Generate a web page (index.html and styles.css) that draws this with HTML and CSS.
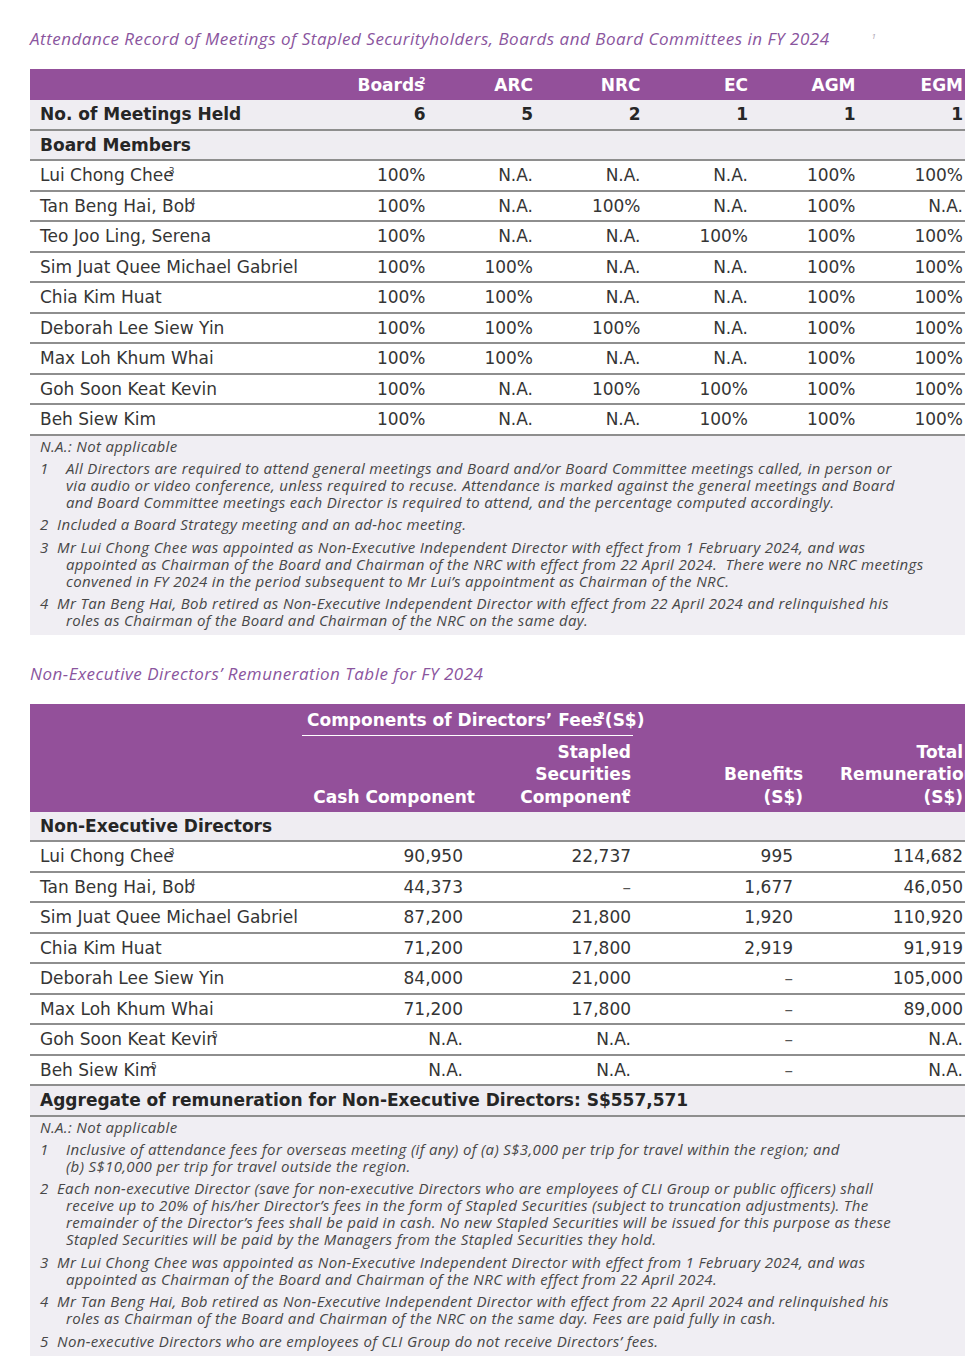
FILE: index.html
```html
<!DOCTYPE html>
<html lang="en">
<head>
<meta charset="utf-8">
<title>Attendance and Remuneration</title>
<link rel="stylesheet" href="styles.css">
</head>
<body>
<div class="page">
  <h2 class="caption">Attendance Record of Meetings of Stapled Securityholders, Boards and Board Committees in FY 2024<span class="cap-sup">1</span></h2>

  <table class="tbl att">
    <colgroup>
      <col class="c-name"><col class="c-n"><col class="c-n"><col class="c-n"><col class="c-n"><col class="c-n"><col class="c-n">
    </colgroup>
    <thead>
      <tr class="head">
        <th class="name"></th>
        <th>Boards<sup class="ov">2</sup></th>
        <th>ARC</th>
        <th>NRC</th>
        <th>EC</th>
        <th>AGM</th>
        <th>EGM</th>
      </tr>
    </thead>
    <tbody>
      <tr class="shade bold"><td class="name">No. of Meetings Held</td><td>6</td><td>5</td><td>2</td><td>1</td><td>1</td><td>1</td></tr>
      <tr class="shade bold"><td class="name" colspan="7">Board Members</td></tr>
      <tr><td class="name">Lui Chong Chee<sup class="ov">3</sup></td><td>100%</td><td>N.A.</td><td>N.A.</td><td>N.A.</td><td>100%</td><td>100%</td></tr>
      <tr><td class="name">Tan Beng Hai, Bob<sup class="ov">4</sup></td><td>100%</td><td>N.A.</td><td>100%</td><td>N.A.</td><td>100%</td><td>N.A.</td></tr>
      <tr><td class="name">Teo Joo Ling, Serena</td><td>100%</td><td>N.A.</td><td>N.A.</td><td>100%</td><td>100%</td><td>100%</td></tr>
      <tr><td class="name">Sim Juat Quee Michael Gabriel</td><td>100%</td><td>100%</td><td>N.A.</td><td>N.A.</td><td>100%</td><td>100%</td></tr>
      <tr><td class="name">Chia Kim Huat</td><td>100%</td><td>100%</td><td>N.A.</td><td>N.A.</td><td>100%</td><td>100%</td></tr>
      <tr><td class="name">Deborah Lee Siew Yin</td><td>100%</td><td>100%</td><td>100%</td><td>N.A.</td><td>100%</td><td>100%</td></tr>
      <tr><td class="name">Max Loh Khum Whai</td><td>100%</td><td>100%</td><td>N.A.</td><td>N.A.</td><td>100%</td><td>100%</td></tr>
      <tr><td class="name">Goh Soon Keat Kevin</td><td>100%</td><td>N.A.</td><td>100%</td><td>100%</td><td>100%</td><td>100%</td></tr>
      <tr><td class="name">Beh Siew Kim</td><td>100%</td><td>N.A.</td><td>N.A.</td><td>100%</td><td>100%</td><td>100%</td></tr>
    </tbody>
  </table>
  <div class="notes notes1">
    <div class="note-na">N.A.: Not applicable</div>
    <div class="note"><span class="num wide">1</span>All Directors are required to attend general meetings and Board and/or Board Committee meetings called, in person or<br>via audio or video conference, unless required to recuse. Attendance is marked against the general meetings and Board<br>and Board Committee meetings each Director is required to attend, and the percentage computed accordingly.</div>
    <div class="note"><span class="num">2</span>Included a Board Strategy meeting and an ad-hoc meeting.</div>
    <div class="note"><span class="num">3</span>Mr Lui Chong Chee was appointed as Non-Executive Independent Director with effect from 1 February 2024, and was<br>appointed as Chairman of the Board and Chairman of the NRC with effect from 22 April 2024.&nbsp; There were no NRC meetings<br>convened in FY 2024 in the period subsequent to Mr Lui’s appointment as Chairman of the NRC.</div>
    <div class="note"><span class="num">4</span>Mr Tan Beng Hai, Bob retired as Non-Executive Independent Director with effect from 22 April 2024 and relinquished his<br>roles as Chairman of the Board and Chairman of the NRC on the same day.</div>
  </div>

  <h2 class="caption caption2">Non-Executive Directors’ Remuneration Table for FY 2024</h2>

  <div class="clip">
  <table class="tbl rem">
    <colgroup>
      <col class="r-name"><col class="r-cash"><col class="r-stap"><col class="r-ben"><col class="r-tot">
    </colgroup>
    <thead>
      <tr class="head h1">
        <th class="name" rowspan="2"></th>
        <th class="group" colspan="2"><div class="group-in">Components of Directors’ Fees<sup class="ov">1</sup><sup class="ov">2</sup>(S$)</div></th>
        <th rowspan="2" class="bottom">Benefits<br>(S$)</th>
        <th rowspan="2" class="bottom total-h">Total<br>Remuneration<br>(S$)</th>
      </tr>
      <tr class="head h2">
        <th class="bottom">Cash Component</th>
        <th class="bottom">Stapled<br>Securities<br>Component<sup class="ov">2</sup></th>
      </tr>
    </thead>
    <tbody>
      <tr class="shade bold"><td class="name" colspan="5">Non-Executive Directors</td></tr>
      <tr><td class="name">Lui Chong Chee<sup class="ov">3</sup></td><td class="cash">90,950</td><td>22,737</td><td class="ben">995</td><td>114,682</td></tr>
      <tr><td class="name">Tan Beng Hai, Bob<sup class="ov">4</sup></td><td class="cash">44,373</td><td class="dash">–</td><td class="ben">1,677</td><td>46,050</td></tr>
      <tr><td class="name">Sim Juat Quee Michael Gabriel</td><td class="cash">87,200</td><td>21,800</td><td class="ben">1,920</td><td>110,920</td></tr>
      <tr><td class="name">Chia Kim Huat</td><td class="cash">71,200</td><td>17,800</td><td class="ben">2,919</td><td>91,919</td></tr>
      <tr><td class="name">Deborah Lee Siew Yin</td><td class="cash">84,000</td><td>21,000</td><td class="ben dash">–</td><td>105,000</td></tr>
      <tr><td class="name">Max Loh Khum Whai</td><td class="cash">71,200</td><td>17,800</td><td class="ben dash">–</td><td>89,000</td></tr>
      <tr><td class="name">Goh Soon Keat Kevin<sup class="ov">5</sup></td><td class="cash">N.A.</td><td>N.A.</td><td class="ben dash">–</td><td>N.A.</td></tr>
      <tr><td class="name">Beh Siew Kim<sup class="ov">5</sup></td><td class="cash">N.A.</td><td>N.A.</td><td class="ben dash">–</td><td>N.A.</td></tr>
      <tr class="shade bold"><td class="name" colspan="5">Aggregate of remuneration for Non-Executive Directors: S$557,571</td></tr>
    </tbody>
  </table>
  </div>
  <div class="notes notes2">
    <div class="note-na">N.A.: Not applicable</div>
    <div class="note"><span class="num wide">1</span>Inclusive of attendance fees for overseas meeting (if any) of (a) S$3,000 per trip for travel within the region; and<br>(b) S$10,000 per trip for travel outside the region.</div>
    <div class="note"><span class="num">2</span>Each non-executive Director (save for non-executive Directors who are employees of CLI Group or public officers) shall<br>receive up to 20% of his/her Director’s fees in the form of Stapled Securities (subject to truncation adjustments). The<br>remainder of the Director’s fees shall be paid in cash. No new Stapled Securities will be issued for this purpose as these<br>Stapled Securities will be paid by the Managers from the Stapled Securities they hold.</div>
    <div class="note"><span class="num">3</span>Mr Lui Chong Chee was appointed as Non-Executive Independent Director with effect from 1 February 2024, and was<br>appointed as Chairman of the Board and Chairman of the NRC with effect from 22 April 2024.</div>
    <div class="note"><span class="num">4</span>Mr Tan Beng Hai, Bob retired as Non-Executive Independent Director with effect from 22 April 2024 and relinquished his<br>roles as Chairman of the Board and Chairman of the NRC on the same day. Fees are paid fully in cash.</div>
    <div class="note"><span class="num">5</span>Non-executive Directors who are employees of CLI Group do not receive Directors’ fees.</div>
  </div>
</div>
</body>
</html>
```

FILE: styles.css
```css
html, body {
  margin: 0;
  padding: 0;
  background: #ffffff;
}

.page {
  width: 935px;
  padding: 26px 15px 10px 30px;
  font-family: "DejaVu Sans", sans-serif;
  color: #353535;
}

.caption {
  margin: 0;
  font-family: "Open Sans", "Lato", sans-serif;
  font-style: italic;
  font-weight: 400;
  font-size: 17px;
  line-height: 20px;
  color: #8a559e;
  letter-spacing: 0.5px;
}

.cap-sup {
  font-size: 8px;
  color: #aaa0b0;
  vertical-align: 6px;
  margin-left: 42px;
}

.caption2 {
  margin-top: 29px;
}

.tbl {
  width: 935px;
  border-collapse: collapse;
  table-layout: fixed;
  font-size: 17px;
  line-height: 20px;
}

.att {
  margin-top: 20px;
}

.c-name { width: 290px; }
.c-n { width: 107.5px; }

.tbl th,
.tbl td {
  padding: 0 2px 0 0;
  text-align: right;
  white-space: nowrap;
  vertical-align: middle;
}

.tbl td {
  height: 28.5px;
  border-bottom: 2px solid #8e8e8e;
}

.tbl th.name,
.tbl td.name {
  text-align: left;
  padding-left: 10px;
}

.head th {
  background: #93509a;
  color: #ffffff;
  font-weight: 700;
}

.att .head th {
  height: 31px;
}

.shade td {
  background: #efedf2;
}

.bold td {
  font-weight: 700;
  color: #262626;
}

sup.ov {
  font-size: 9px;
  line-height: 0;
  vertical-align: 7px;
  margin-left: -5px;
  font-weight: 400;
}

.head sup.ov {
  font-weight: 700;
}

.notes {
  background: #f0eef3;
  padding: 2px 10px 6px 10px;
  font-family: "Open Sans", "Lato", sans-serif;
  font-style: italic;
  font-size: 15px;
  line-height: 17px;
  letter-spacing: 0.35px;
  color: #474747;
  white-space: nowrap;
}

.note-na {
  margin-bottom: 5px;
}

.note {
  padding-left: 26px;
  text-indent: -26px;
  margin-bottom: 5.5px;
}

.note:last-child {
  margin-bottom: 0;
}

.num {
  display: inline-block;
  width: 17px;
  text-indent: 0;
  letter-spacing: 0;
}

.num.wide {
  width: 26px;
}

.clip {
  margin-top: 20px;
  width: 935px;
  overflow: hidden;
}

.r-name { width: 272px; }
.r-cash { width: 175px; }
.r-stap { width: 156px; }
.r-ben { width: 172px; }
.r-tot { width: 160px; }

.rem .head th {
  line-height: 22.5px;
}

.rem .h1 th {
  height: 36px;
}

.rem .h1 th.group {
  text-align: left;
  vertical-align: top;
  padding: 5px 0 0 0;
  height: 31px;
}

.group-in {
  border-bottom: 1px solid #ffffff;
  padding: 0 0 3px 5px;
}

.rem .head th.bottom {
  vertical-align: bottom;
  padding-bottom: 3.5px;
}

.rem .head th.total-h {
  padding-left: 35px;
}

.rem .h2 th {
  height: 68px;
}

.rem td.cash {
  padding-right: 14px;
}

.rem td.ben {
  padding-right: 12px;
}

.rem td.dash {
  color: #555555;
}
```
